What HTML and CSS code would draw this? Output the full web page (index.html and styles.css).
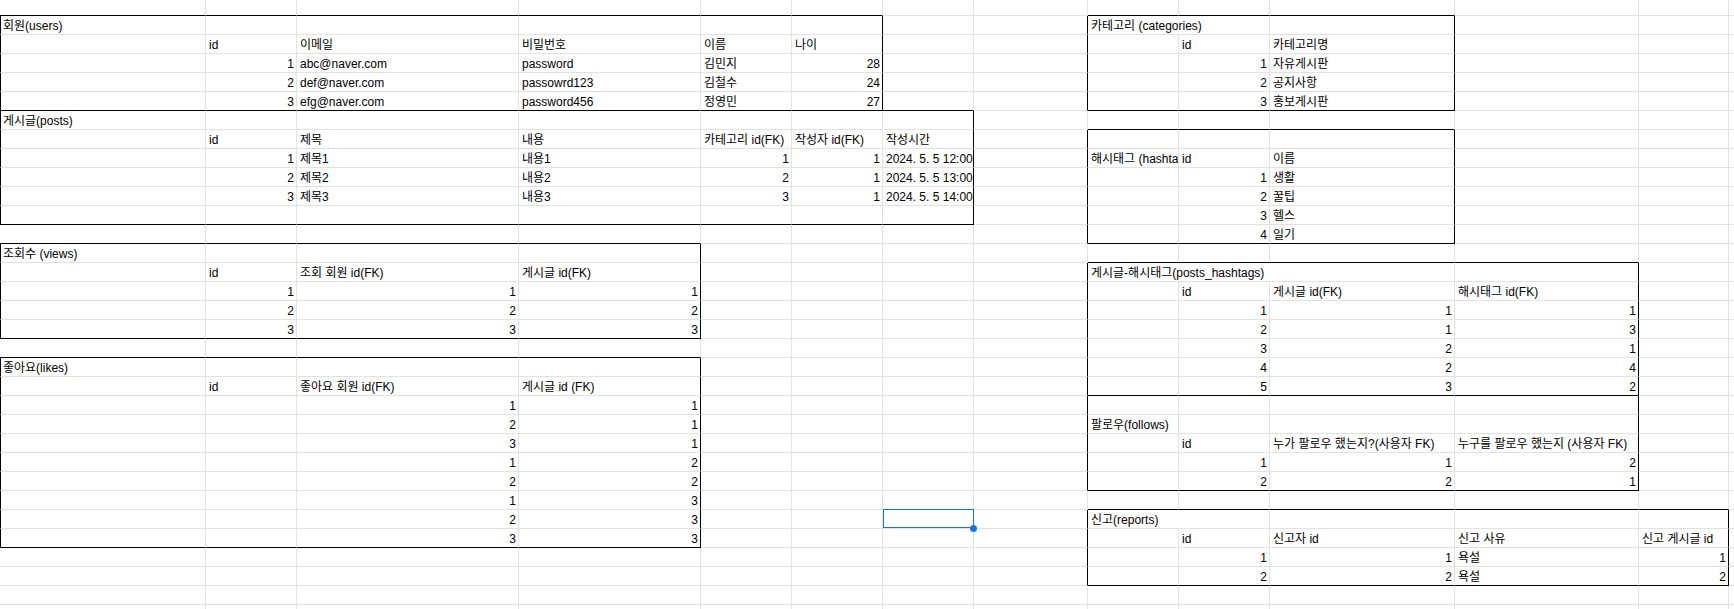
FILE: index.html
```html
<!DOCTYPE html>
<html lang="ko">

<head>
    <meta charset="UTF-8">
    <meta name="viewport" content="width=device-width, initial-scale=1.0">
    <title>ERD 시트</title>
    <link rel="stylesheet" href="styles.css">
</head>

<body>
    <div class="sheet" id="sheet"></div>

    <script>
        const COL_COUNT = 14;
        const ROW_COUNT = 33;

        // row -> [column, text, span]
        const cells = {
            1: [[0, "회원(users)"], [8, "카테고리 (categories)", 2]],
            2: [[1, "id"], [2, "이메일"], [3, "비밀번호"], [4, "이름"], [5, "나이"], [9, "id"], [10, "카테고리명"]],
            3: [[1, "1"], [2, "abc@naver.com"], [3, "password"], [4, "김민지"], [5, "28"], [9, "1"], [10, "자유게시판"]],
            4: [[1, "2"], [2, "def@naver.com"], [3, "passowrd123"], [4, "김철수"], [5, "24"], [9, "2"], [10, "공지사항"]],
            5: [[1, "3"], [2, "efg@naver.com"], [3, "password456"], [4, "정영민"], [5, "27"], [9, "3"], [10, "홍보게시판"]],
            6: [[0, "게시글(posts)"]],
            7: [[1, "id"], [2, "제목"], [3, "내용"], [4, "카테고리 id(FK)"], [5, "작성자 id(FK)"], [6, "작성시간"]],
            8: [[1, "1"], [2, "제목1"], [3, "내용1"], [4, "1"], [5, "1"], [6, "2024. 5. 5 12:00"], [8, "해시태그 (hashta"], [9, "id"], [10, "이름"]],
            9: [[1, "2"], [2, "제목2"], [3, "내용2"], [4, "2"], [5, "1"], [6, "2024. 5. 5 13:00"], [9, "1"], [10, "생활"]],
            10: [[1, "3"], [2, "제목3"], [3, "내용3"], [4, "3"], [5, "1"], [6, "2024. 5. 5 14:00"], [9, "2"], [10, "꿀팁"]],
            11: [[9, "3"], [10, "헬스"]],
            12: [[9, "4"], [10, "일기"]],
            13: [[0, "조회수 (views)"]],
            14: [[1, "id"], [2, "조회 회원 id(FK)"], [3, "게시글 id(FK)"], [8, "게시글-해시태그(posts_hashtags)", 3]],
            15: [[1, "1"], [2, "1"], [3, "1"], [9, "id"], [10, "게시글 id(FK)"], [11, "해시태그 id(FK)"]],
            16: [[1, "2"], [2, "2"], [3, "2"], [9, "1"], [10, "1"], [11, "1"]],
            17: [[1, "3"], [2, "3"], [3, "3"], [9, "2"], [10, "1"], [11, "3"]],
            18: [[9, "3"], [10, "2"], [11, "1"]],
            19: [[0, "좋아요(likes)"], [9, "4"], [10, "2"], [11, "4"]],
            20: [[1, "id"], [2, "좋아요 회원 id(FK)"], [3, "게시글 id (FK)"], [9, "5"], [10, "3"], [11, "2"]],
            21: [[2, "1"], [3, "1"]],
            22: [[2, "2"], [3, "1"], [8, "팔로우(follows)"]],
            23: [[2, "3"], [3, "1"], [9, "id"], [10, "누가 팔로우 했는지?(사용자 FK)"], [11, "누구를 팔로우 했는지 (사용자 FK)"]],
            24: [[2, "1"], [3, "2"], [9, "1"], [10, "1"], [11, "2"]],
            25: [[2, "2"], [3, "2"], [9, "2"], [10, "2"], [11, "1"]],
            26: [[2, "1"], [3, "3"]],
            27: [[2, "2"], [3, "3"], [8, "신고(reports)", 2]],
            28: [[2, "3"], [3, "3"], [9, "id"], [10, "신고자 id"], [11, "신고 사유"], [12, "신고 게시글 id"]],
            29: [[9, "1"], [10, "1"], [11, "욕설"], [12, "1"]],
            30: [[9, "2"], [10, "2"], [11, "욕설"], [12, "2"]]
        };

        // [firstRow, lastRow, firstCol, lastCol]
        const tables = [
            [1, 5, 0, 5], [6, 11, 0, 6], [13, 17, 0, 3], [19, 28, 0, 3],
            [1, 5, 8, 10], [7, 12, 8, 10], [14, 20, 8, 11], [21, 25, 8, 11], [27, 30, 8, 12]
        ];

        const selected = [27, 6];

        const lines = [];
        for (let r = 0; r < ROW_COUNT; r++) {
            lines.push([]);
            for (let c = 0; c < COL_COUNT; c++) lines[r].push({ r: false, b: false, l: false });
        }

        tables.forEach(([r1, r2, c1, c2]) => {
            for (let c = c1; c <= c2; c++) {
                if (r1 > 0) lines[r1 - 1][c].b = true;
                lines[r2][c].b = true;
            }
            for (let r = r1; r <= r2; r++) {
                if (c1 > 0) lines[r][c1 - 1].r = true;
                else lines[r][0].l = true;
                lines[r][c2].r = true;
            }
        });

        const sheet = document.querySelector("#sheet");

        for (let r = 0; r < ROW_COUNT; r++) {
            const row = {};
            (cells[r] || []).forEach(([c, text, span]) => row[c] = { text, span: span || 1 });

            for (let c = 0; c < COL_COUNT; c++) {
                const info = row[c];
                const span = info ? info.span : 1;
                const last = c + span - 1;
                const cell = document.createElement("div");
                cell.className = "cell";

                if (lines[r][last].r) cell.classList.add("line-r");
                if (lines[r][c].b) cell.classList.add("line-b");
                if (lines[r][c].l) cell.classList.add("line-l");
                if (r === selected[0] && c === selected[1]) cell.classList.add("selected");

                if (info) {
                    cell.textContent = info.text;
                    if (/^[\d. :]+$/.test(info.text)) cell.classList.add("num");
                    if (span > 1) cell.style.gridColumn = "span " + span;
                }

                sheet.appendChild(cell);
                c = last;
            }
        }
    </script>
</body>

</html>
```

FILE: styles.css
```css
body {
    margin: 0;
    overflow: hidden;
    background: #fff;
    color: #000;
    font-family: "Liberation Sans", Arial, "Noto Sans CJK KR", sans-serif;
    font-size: 12px;
}

.sheet {
    display: grid;
    grid-template-columns: 206px 91px 222px 182px 91px 91px 91px 114px 91px 91px 185px 184px 90px minmax(0, 1fr);
    grid-template-rows: 16px repeat(32, 19px);
    height: 609px;
    overflow: hidden;
}

.cell {
    box-sizing: border-box;
    border-right: 1px solid #e2e2e2;
    border-bottom: 1px solid #e2e2e2;
    padding: 2px 2px 0 3px;
    line-height: 16px;
    white-space: nowrap;
    overflow: hidden;
}

.num {
    text-align: right;
}

.line-r {
    border-right-color: #000;
}

.line-b {
    border-bottom-color: #000;
}

.line-l {
    border-left: 1px solid #000;
    padding-left: 2px;
}

.selected {
    position: relative;
    overflow: visible;
}

.selected::after {
    content: "";
    position: absolute;
    top: -1px;
    left: 0;
    right: -1px;
    bottom: 0;
    border: 1px solid #1a73e8;
}

.selected::before {
    content: "";
    position: absolute;
    right: -4px;
    bottom: -4px;
    width: 7px;
    height: 7px;
    border-radius: 50%;
    background: #1a73e8;
    z-index: 1;
}
```
